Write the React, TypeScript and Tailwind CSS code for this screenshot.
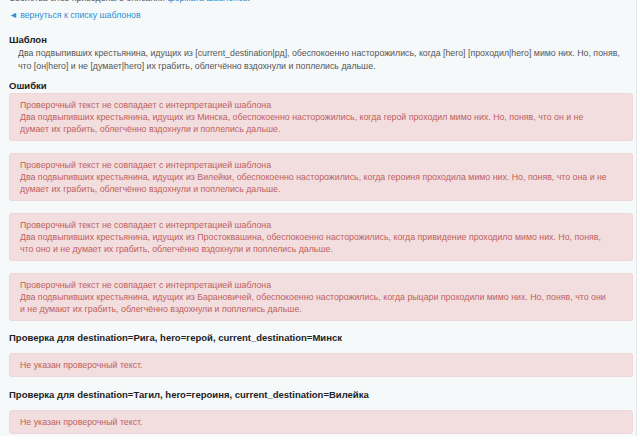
import React from 'react';

// line breaks kept as in the reference
const errors: [string, string][] = [
  [
    'Два подвыпивших крестьянина, идущих из Минска, обеспокоенно насторожились, когда герой проходил мимо них. Но, поняв, что он и не',
    'думает их грабить, облегчённо вздохнули и поплелись дальше.',
  ],
  [
    'Два подвыпивших крестьянина, идущих из Вилейки, обеспокоенно насторожились, когда героиня проходила мимо них. Но, поняв, что она и не',
    'думает их грабить, облегчённо вздохнули и поплелись дальше.',
  ],
  [
    'Два подвыпивших крестьянина, идущих из Простоквашина, обеспокоенно насторожились, когда привидение проходило мимо них. Но, поняв,',
    'что оно и не думает их грабить, облегчённо вздохнули и поплелись дальше.',
  ],
  [
    'Два подвыпивших крестьянина, идущих из Барановичей, обеспокоенно насторожились, когда рыцари проходили мимо них. Но, поняв, что они',
    'и не думают их грабить, облегчённо вздохнули и поплелись дальше.',
  ],
];

const checks = [
  'Проверка для destination=Рига, hero=герой, current_destination=Минск',
  'Проверка для destination=Тагил, hero=героиня, current_destination=Вилейка',
];

const Alert: React.FC<{ children: React.ReactNode }> = ({ children }) => (
  <div className="bg-[#f2dede] border border-[#efd6d9] rounded-[3px] px-[10px] py-[5px] text-[#c0605e] leading-[12px] whitespace-nowrap overflow-hidden">
    {children}
  </div>
);

export default function App() {
  return (
    <div className="w-[640px] h-[444px] overflow-hidden bg-white" style={{ fontFamily: '"Liberation Sans", Arial, sans-serif' }}>
      <div className="w-[637px] h-full bg-[#f6f9fa] border-r border-[#e3e8ea] pl-[9px] pr-[3px] text-[8.8px] text-[#444]">
        <p className="-mt-[8px] leading-[13px] text-[#555]">
          Свойства слов приведены в описании <span className="text-[#2a8fd6]">формата шаблонов</span>.
        </p>
        <a className="block mt-[4px] leading-[13px] text-[#2a8fd6]">◄ вернуться к списку шаблонов</a>

        <h3 className="mt-[11px] text-[9.5px] font-bold leading-[14px] text-[#222]">Шаблон</h3>
        <p className="pl-[9px] leading-[13px] text-[#555] whitespace-nowrap">
          Два подвыпивших крестьянина, идущих из [current_destination|рд], обеспокоенно насторожились, когда [hero] [проходил|hero] мимо них. Но, поняв,
          <br />
          что [он|hero] и не [думает|hero] их грабить, облегчённо вздохнули и поплелись дальше.
        </p>

        <h3 className="mt-[6px] text-[9.5px] font-bold leading-[14px] text-[#222]">Ошибки</h3>
        <div className="flex flex-col gap-[12px]">
          {errors.map(([a, b], i) => (
            <Alert key={i}>
              Проверочный текст не совпадает с интерпретацией шаблона
              <br />
              {a}
              <br />
              {b}
            </Alert>
          ))}
        </div>

        {checks.map((c, i) => (
          <div key={i}>
            <h3 className={`${i === 0 ? 'mt-[10px]' : 'mt-[11px]'} text-[9.5px] font-bold leading-[14px] text-[#222]`}>{c}</h3>
            <div className="mt-[8px]">
              <Alert>Не указан проверочный текст.</Alert>
            </div>
          </div>
        ))}
      </div>
    </div>
  );
}
